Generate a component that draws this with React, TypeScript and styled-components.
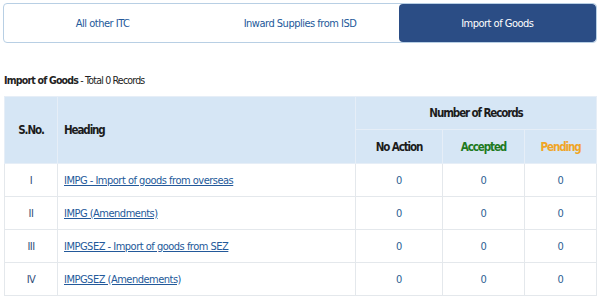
import React from 'react';
import styled, { createGlobalStyle } from 'styled-components';

const GlobalStyle = createGlobalStyle`
  body {
    margin: 0;
    background: #ffffff;
    font-family: "DejaVu Sans Condensed", "DejaVu Sans", Verdana, sans-serif;
    font-size: 11px;
    letter-spacing: -0.5px;
    color: #222;
  }
`;

const COLORS = {
  border: '#b8cfe4',
  active: '#2b4d85',
  headBg: '#d6e6f5',
  cellLine: '#e4e8ec',
  link: '#23599a',
  zero: '#2d5f93',
  green: '#1e7a1e',
  orange: '#f0a526',
};

type Row = { sno: string; heading: string; noAction: number; accepted: number; pending: number };

const rows: Row[] = [
  { sno: 'I', heading: 'IMPG - Import of goods from overseas', noAction: 0, accepted: 0, pending: 0 },
  { sno: 'II', heading: 'IMPG (Amendments)', noAction: 0, accepted: 0, pending: 0 },
  { sno: 'III', heading: 'IMPGSEZ - Import of goods from SEZ', noAction: 0, accepted: 0, pending: 0 },
  { sno: 'IV', heading: 'IMPGSEZ (Amendements)', noAction: 0, accepted: 0, pending: 0 },
];

const tabs = ['All other ITC', 'Inward Supplies from ISD', 'Import of Goods'];

export const App: React.FC = () => (
  <Page>
    <GlobalStyle />
    <TabBar>
      {tabs.map((t, i) => (
        <Tab key={t} $active={i === tabs.length - 1}>
          {t}
        </Tab>
      ))}
    </TabBar>
    <Title>
      <strong>Import of Goods</strong> - Total 0 Records
    </Title>
    <Table>
      <colgroup>
        <col style={{ width: 53 }} />
        <col style={{ width: 298 }} />
        <col style={{ width: 87 }} />
        <col style={{ width: 82 }} />
        <col />
      </colgroup>
      <thead>
        <HeadRow $h={33}>
          <Th rowSpan={2}>S.No.</Th>
          <Th rowSpan={2} $left>
            Heading
          </Th>
          <Th colSpan={3}>Number of Records</Th>
        </HeadRow>
        <HeadRow $h={34}>
          <Th>No Action</Th>
          <Th $color={COLORS.green}>Accepted</Th>
          <Th $color={COLORS.orange}>Pending</Th>
        </HeadRow>
      </thead>
      <tbody>
        {rows.map((r) => (
          <BodyRow key={r.sno}>
            <SnoCell>{r.sno}</SnoCell>
            <Td $left>
              <Link href="#">{r.heading}</Link>
            </Td>
            <Td>{r.noAction}</Td>
            <Td>{r.accepted}</Td>
            <Td>{r.pending}</Td>
          </BodyRow>
        ))}
      </tbody>
    </Table>
  </Page>
);

const Page = styled.div`
  width: 600px;
  padding: 3px 3px 0 4px;
  box-sizing: border-box;
`;

const TabBar = styled.div`
  display: grid;
  grid-template-columns: repeat(3, 1fr);
  height: 40px;
  margin-left: -1px;
  border: 1px solid ${COLORS.border};
  border-radius: 4px;
  box-sizing: border-box;
  overflow: hidden;
`;

const Tab = styled.div<{ $active?: boolean }>`
  display: flex;
  align-items: center;
  justify-content: center;
  color: ${(p) => (p.$active ? '#ffffff' : COLORS.link)};
  background: ${(p) => (p.$active ? COLORS.active : 'transparent')};
  border-radius: ${(p) => (p.$active ? '4px' : '0')};
`;

const Title = styled.div`
  margin-top: 29px;
  line-height: 16px;
  font-size: 10.5px;
  letter-spacing: -0.8px;
  color: #222;

  strong {
    font-weight: bold;
  }
`;

const Table = styled.table`
  margin-top: 8px;
  width: 593px;
  border-collapse: collapse;
  table-layout: fixed;
  border: 1px solid ${COLORS.cellLine};
`;

const HeadRow = styled.tr<{ $h: number }>`
  height: ${(p) => p.$h}px;
  background: ${COLORS.headBg};
`;

const Th = styled.th<{ $left?: boolean; $color?: string }>`
  padding: 0 6px;
  font-size: 11.5px;
  font-weight: bold;
  letter-spacing: -1.1px;
  text-align: ${(p) => (p.$left ? 'left' : 'center')};
  color: ${(p) => p.$color || '#1c1c1c'};
  border: 1px solid #e6eef7;
`;

const BodyRow = styled.tr`
  height: 33px;
`;

const Td = styled.td<{ $left?: boolean }>`
  padding: 0 6px;
  text-align: ${(p) => (p.$left ? 'left' : 'center')};
  color: ${COLORS.zero};
  border: 1px solid ${COLORS.cellLine};
`;

const SnoCell = styled(Td)`
  color: #2f4e78;
`;

const Link = styled.a`
  color: ${COLORS.link};
  text-decoration: underline;
`;

export default App;
